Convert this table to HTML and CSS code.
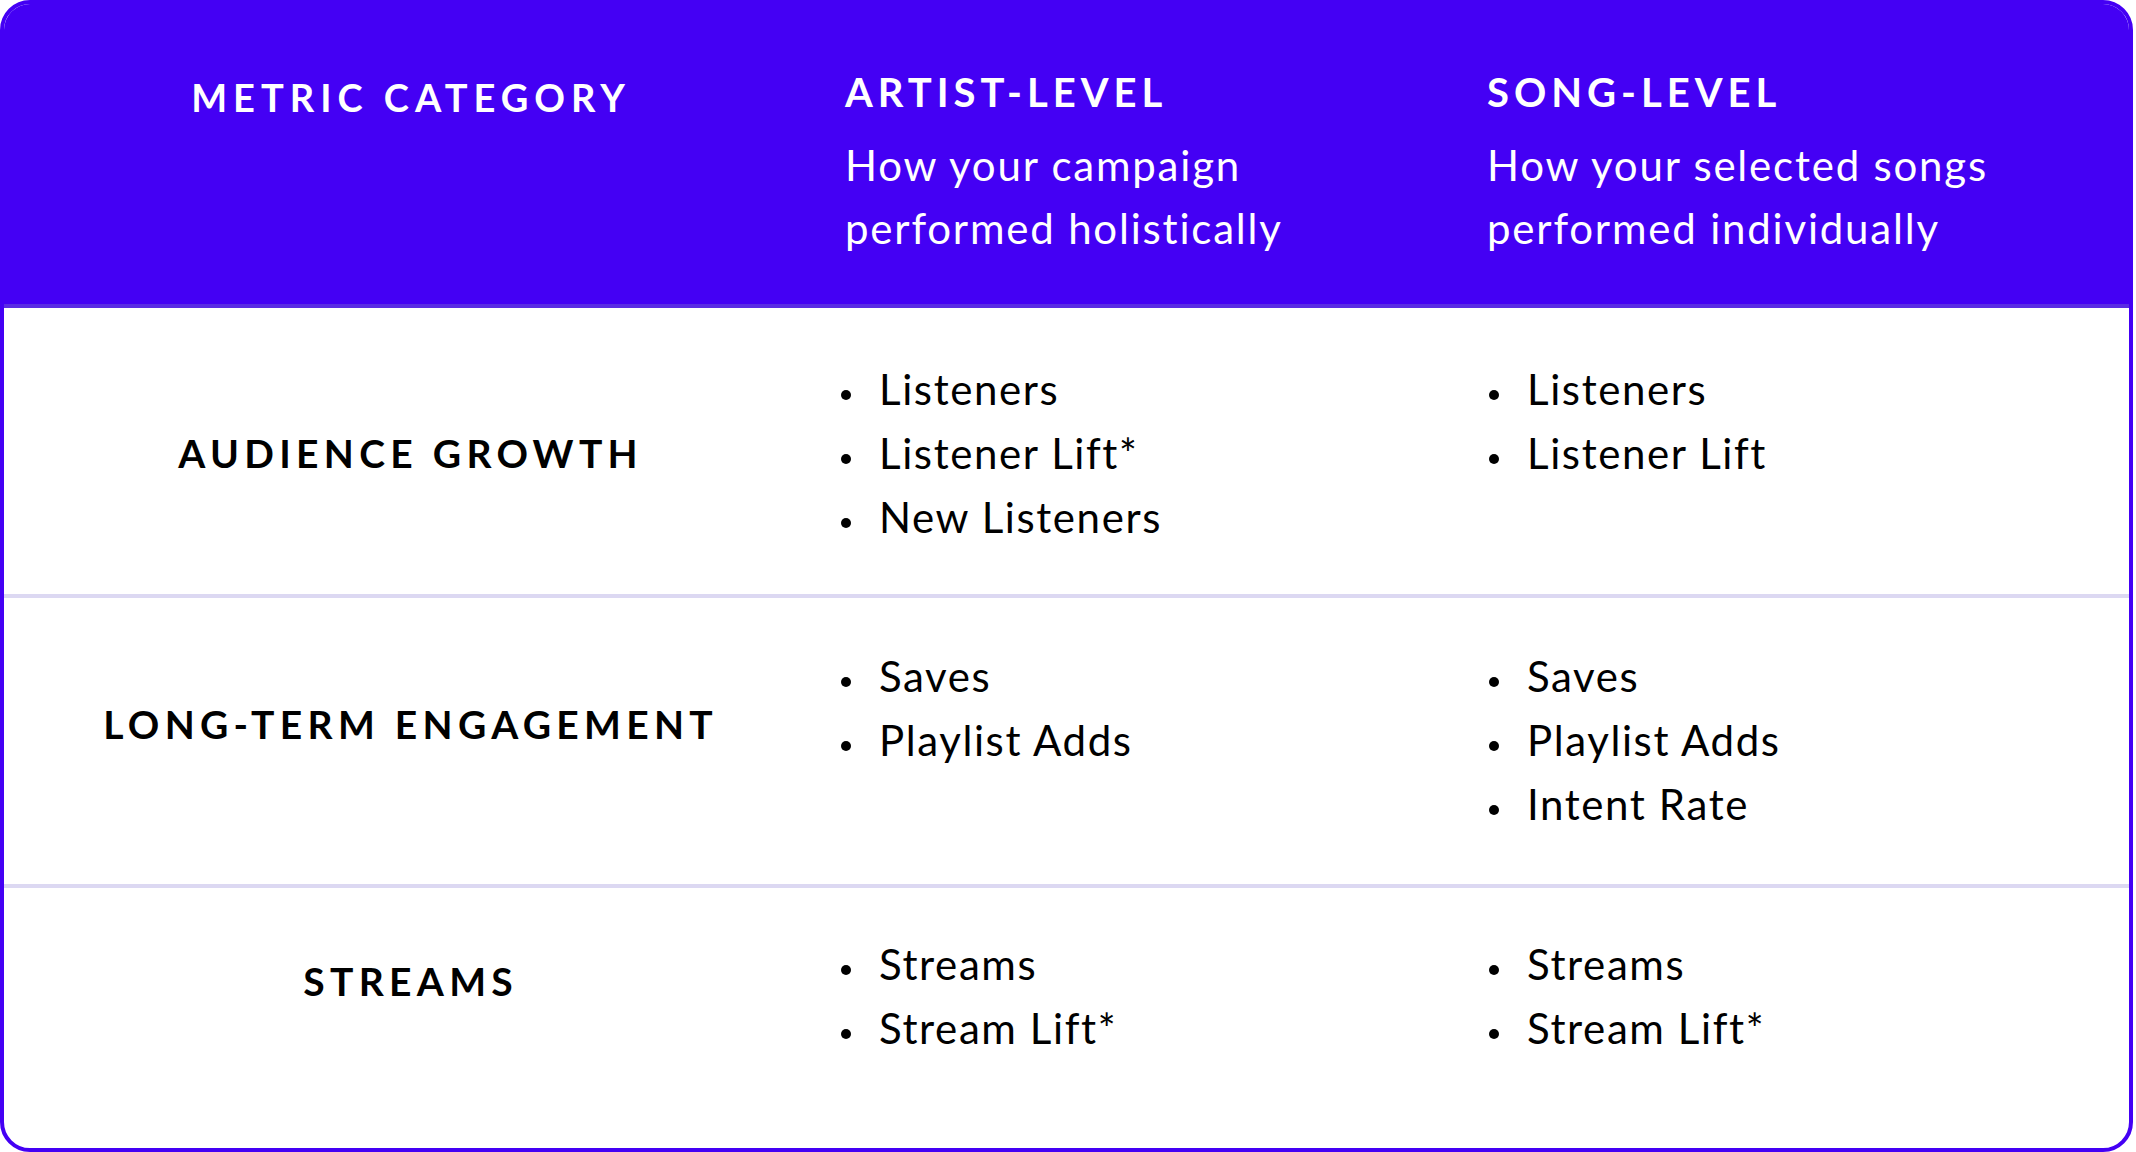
FILE: index.html
```html
<!DOCTYPE html>
<html lang="en">
<head>
<meta charset="utf-8">
<title>Metric categories</title>
<link rel="stylesheet" href="styles.css">
</head>
<body>
<div class="card">
  <div class="head">
    <div class="cell cat-head">METRIC CATEGORY</div>
    <div class="cell col-head">
      <div class="col-title">ARTIST-LEVEL</div>
      <div class="col-sub">How your campaign<br>performed holistically</div>
    </div>
    <div class="cell col-head">
      <div class="col-title">SONG-LEVEL</div>
      <div class="col-sub">How your selected songs<br>performed individually</div>
    </div>
  </div>
  <div class="row row-1">
    <div class="cell label">AUDIENCE GROWTH</div>
    <ul class="cell list">
      <li>Listeners</li>
      <li>Listener Lift*</li>
      <li>New Listeners</li>
    </ul>
    <ul class="cell list list-song">
      <li>Listeners</li>
      <li>Listener Lift</li>
    </ul>
  </div>
  <div class="row row-2">
    <div class="cell label">LONG-TERM ENGAGEMENT</div>
    <ul class="cell list">
      <li>Saves</li>
      <li>Playlist Adds</li>
    </ul>
    <ul class="cell list list-song">
      <li>Saves</li>
      <li>Playlist Adds</li>
      <li>Intent Rate</li>
    </ul>
  </div>
  <div class="row row-3">
    <div class="cell label">STREAMS</div>
    <ul class="cell list">
      <li>Streams</li>
      <li>Stream Lift*</li>
    </ul>
    <ul class="cell list list-song">
      <li>Streams</li>
      <li>Stream Lift*</li>
    </ul>
  </div>
</div>
</body>
</html>
```

FILE: styles.css
```css
html, body {
  margin: 0;
  padding: 0;
  background: #ffffff;
}

body {
  font-family: "Lato", "Open Sans", sans-serif;
  color: #000000;
}

.card {
  width: 2133px;
  height: 1152px;
  box-sizing: border-box;
  border: 4px solid #4400f4;
  border-radius: 30px;
  overflow: hidden;
  display: flex;
  flex-direction: column;
  background: #ffffff;
}

.head,
.row {
  display: grid;
  grid-template-columns: 808px 642px 1fr;
}

.head {
  background: #4400f4;
  height: 300px;
  border-bottom: 4px solid #5a2be4;
  color: #ffffff;
}

.cell {
  margin: 0;
  box-sizing: border-box;
}

.cat-head {
  padding-top: 73px;
  text-align: center;
  font-weight: 700;
  font-size: 38px;
  line-height: 40px;
  letter-spacing: 6px;
  text-indent: 6px;
}

.col-head {
  padding-top: 68px;
  padding-left: 33px;
}

.col-title {
  font-weight: 700;
  font-size: 40px;
  line-height: 40px;
  letter-spacing: 5px;
}

.col-sub {
  margin-top: 22px;
  font-size: 42px;
  line-height: 63px;
  letter-spacing: 1.8px;
}

.row {
  padding: 46px 0 48px;
  border-bottom: 4px solid #dcd8f2;
}

.row-1 {
  padding-top: 49px;
  padding-bottom: 45px;
}

.row-3 {
  flex: 1;
  padding-top: 44px;
  border-bottom: none;
}

.label {
  text-align: center;
  font-weight: 700;
  font-size: 39px;
  line-height: 40px;
  letter-spacing: 5.3px;
  text-indent: 5.3px;
}

.row-1 .label { padding-top: 76px; }
.row-2 .label { padding-top: 60px; }
.row-3 .label { padding-top: 29px; }

.list {
  list-style: none;
  padding: 0 0 0 29px;
  font-size: 42px;
  line-height: 64px;
  letter-spacing: 1.6px;
}

.list-song {
  padding-left: 35px;
}

.list li {
  display: flex;
  align-items: flex-start;
}

.list li::before {
  content: "";
  flex: none;
  width: 10px;
  height: 10px;
  border-radius: 50%;
  background: #000000;
  margin-top: 33px;
  margin-right: 28px;
}
```
